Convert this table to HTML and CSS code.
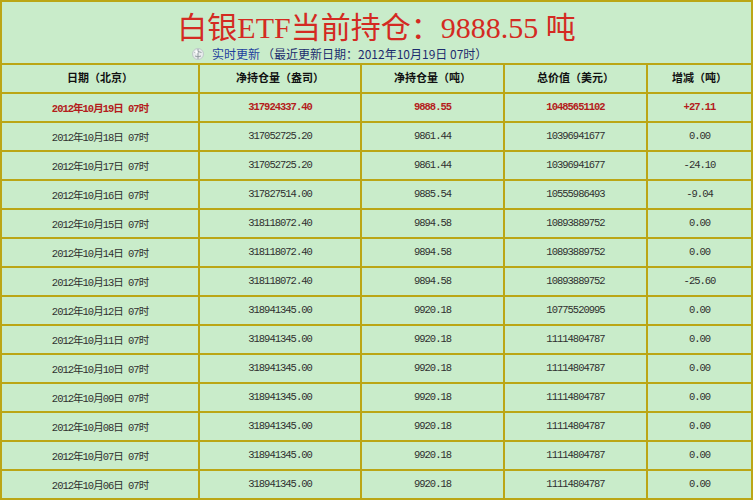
FILE: index.html
```html
<!DOCTYPE html>
<html lang="zh">
<head>
<meta charset="utf-8">
<title>白银ETF当前持仓</title>
<link rel="stylesheet" href="styles.css">
</head>
<body>
<div class="sheet">
  <div class="head">
    <div class="title">白银ETF当前持仓：9888.55 吨</div>
    <div class="sub">
      <svg class="globe" width="12" height="14" viewBox="0 0 12 14">
        <circle cx="6" cy="7" r="5.5" fill="#e8ecec" stroke="#b8c0c4" stroke-width="0.8"/>
        <path d="M2.5 5.5 Q6 3.5 9.5 5.5 M6 2 L6 12 M3 9 Q6 10.5 9 9" fill="none" stroke="#8a949a" stroke-width="0.9"/>
        <circle cx="4.5" cy="5" r="1.4" fill="#ffffff"/>
      </svg>
      <span class="live">实时更新</span>
      <span class="upd">（最近更新日期：2012年10月19日 07时）</span>
    </div>
  </div>

  <div class="c th">日期（北京）</div>
  <div class="c th">净持仓量（盎司）</div>
  <div class="c th">净持仓量（吨）</div>
  <div class="c th">总价值（美元）</div>
  <div class="c th">增减（吨）</div>

  <div class="c hot">2012年10月19日 07时</div>
  <div class="c hot">317924337.40</div>
  <div class="c hot">9888.55</div>
  <div class="c hot">10485651102</div>
  <div class="c hot">+27.11</div>

  <div class="c">2012年10月18日 07时</div>
  <div class="c">317052725.20</div>
  <div class="c">9861.44</div>
  <div class="c">10396941677</div>
  <div class="c">0.00</div>

  <div class="c">2012年10月17日 07时</div>
  <div class="c">317052725.20</div>
  <div class="c">9861.44</div>
  <div class="c">10396941677</div>
  <div class="c">-24.10</div>

  <div class="c">2012年10月16日 07时</div>
  <div class="c">317827514.00</div>
  <div class="c">9885.54</div>
  <div class="c">10555986493</div>
  <div class="c">-9.04</div>

  <div class="c">2012年10月15日 07时</div>
  <div class="c">318118072.40</div>
  <div class="c">9894.58</div>
  <div class="c">10893889752</div>
  <div class="c">0.00</div>

  <div class="c">2012年10月14日 07时</div>
  <div class="c">318118072.40</div>
  <div class="c">9894.58</div>
  <div class="c">10893889752</div>
  <div class="c">0.00</div>

  <div class="c">2012年10月13日 07时</div>
  <div class="c">318118072.40</div>
  <div class="c">9894.58</div>
  <div class="c">10893889752</div>
  <div class="c">-25.60</div>

  <div class="c">2012年10月12日 07时</div>
  <div class="c">318941345.00</div>
  <div class="c">9920.18</div>
  <div class="c">10775520995</div>
  <div class="c">0.00</div>

  <div class="c">2012年10月11日 07时</div>
  <div class="c">318941345.00</div>
  <div class="c">9920.18</div>
  <div class="c">11114804787</div>
  <div class="c">0.00</div>

  <div class="c">2012年10月10日 07时</div>
  <div class="c">318941345.00</div>
  <div class="c">9920.18</div>
  <div class="c">11114804787</div>
  <div class="c">0.00</div>

  <div class="c">2012年10月09日 07时</div>
  <div class="c">318941345.00</div>
  <div class="c">9920.18</div>
  <div class="c">11114804787</div>
  <div class="c">0.00</div>

  <div class="c">2012年10月08日 07时</div>
  <div class="c">318941345.00</div>
  <div class="c">9920.18</div>
  <div class="c">11114804787</div>
  <div class="c">0.00</div>

  <div class="c">2012年10月07日 07时</div>
  <div class="c">318941345.00</div>
  <div class="c">9920.18</div>
  <div class="c">11114804787</div>
  <div class="c">0.00</div>

  <div class="c">2012年10月06日 07时</div>
  <div class="c">318941345.00</div>
  <div class="c">9920.18</div>
  <div class="c">11114804787</div>
  <div class="c">0.00</div>
</div>
</body>
</html>
```

FILE: styles.css
```css
html, body {
  margin: 0;
  padding: 0;
  background: #c9ecca;
}

.sheet {
  width: 753px;
  box-sizing: border-box;
  display: grid;
  grid-template-columns: 196px 160px 141px 141px 103px;
  grid-template-rows: 61px;
  grid-auto-rows: 27px;
  gap: 2px;
  background: #bba616;
  border: 2px solid #bba616;
  font-family: "Liberation Mono", "Noto Sans CJK SC", monospace;
}

.head {
  grid-column: 1 / -1;
  box-sizing: border-box;
  padding-top: 8px;
  background: #c9ecca;
  display: flex;
  flex-direction: column;
}

.title {
  height: 36px;
  line-height: 36px;
  text-align: center;
  color: #d42a22;
  font-family: "Liberation Serif", "Noto Sans CJK SC", serif;
  font-size: 30px;
}

.sub {
  height: 16px;
  display: flex;
  align-items: center;
  padding-left: 190px;
  font-family: "Noto Sans CJK SC", sans-serif;
  font-size: 12px;
  line-height: 16px;
}

.globe {
  margin-right: 8px;
}

.live {
  color: #1e3f9e;
  margin-right: 2px;
}

.upd {
  color: #1d2d6e;
}

.c {
  background: #c9ecca;
  display: flex;
  align-items: center;
  justify-content: center;
  color: #303030;
  font-size: 10.5px;
  letter-spacing: -1px;
  white-space: nowrap;
  padding-bottom: 1px;
  box-sizing: border-box;
}

.th {
  font-family: "Noto Sans CJK SC", sans-serif;
  font-weight: 700;
  font-size: 11px;
  letter-spacing: 0;
  color: #111111;
  padding-bottom: 3px;
}

.hot {
  color: #b41c1c;
  font-weight: 700;
}
```
